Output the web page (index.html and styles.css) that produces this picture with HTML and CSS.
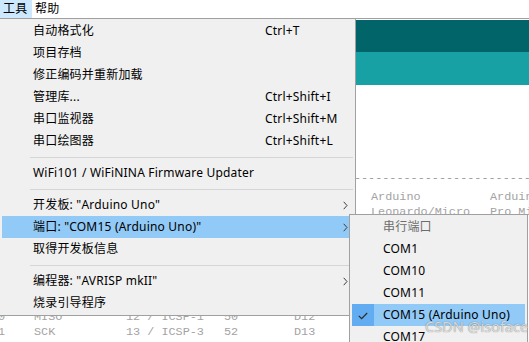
FILE: index.html
```html
<!DOCTYPE html>
<html lang="zh-CN">
<head>
    <meta charset="UTF-8">
    <meta name="viewport" content="width=device-width, initial-scale=1.0">
    <title>Arduino IDE - 工具</title>
    <link rel="stylesheet" href="styles.css">
</head>
<body>
    <div class="window">
        <div class="menubar">
            <span class="menubar-item active">工具</span>
            <span class="menubar-item">帮助</span>
        </div>
        <div class="toolbar"></div>
        <div class="tabs"></div>
        <div class="editor">
            <div class="line dashes">----------------------------------------------------------------------------</div>
            <div class="line boards"><span>Arduino</span><span>Arduino</span></div>
            <div class="line boards"><span>Leonardo/Micro</span><span>Pro Mini</span></div>
            <div class="line"></div>
            <div class="line"></div>
            <div class="line"></div>
            <div class="line"></div>
            <div class="line"></div>
            <div class="line"></div>
            <div class="line pins"><span>0</span><span>MISO</span><span>12 / ICSP-1</span><span>50</span><span>D12</span></div>
            <div class="line pins"><span>1</span><span>SCK</span><span>13 / ICSP-3</span><span>52</span><span>D13</span></div>
        </div>

        <!-- 工具 dropdown -->
        <div class="menu main-menu">
            <div class="item"><span>自动格式化</span><span>Ctrl+T</span></div>
            <div class="item"><span>项目存档</span></div>
            <div class="item"><span>修正编码并重新加载</span></div>
            <div class="item"><span>管理库...</span><span>Ctrl+Shift+I</span></div>
            <div class="item"><span>串口监视器</span><span>Ctrl+Shift+M</span></div>
            <div class="item"><span>串口绘图器</span><span>Ctrl+Shift+L</span></div>
            <div class="separator"></div>
            <div class="item"><span>WiFi101 / WiFiNINA Firmware Updater</span></div>
            <div class="separator"></div>
            <div class="item"><span>开发板: "Arduino Uno"</span><span></span>
                <svg class="arrow" width="5" height="9" viewBox="0 0 5 9"><path d="M0.7 0.8 L4 4.5 L0.7 8.2" fill="none" stroke="#3c3c3c" stroke-width="1"/></svg>
            </div>
            <div class="item selected"><span>端口: "COM15 (Arduino Uno)"</span><span></span>
                <svg class="arrow" width="5" height="9" viewBox="0 0 5 9"><path d="M0.7 0.8 L4 4.5 L0.7 8.2" fill="none" stroke="#3c3c3c" stroke-width="1"/></svg>
            </div>
            <div class="item"><span>取得开发板信息</span></div>
            <div class="separator"></div>
            <div class="item"><span>编程器: "AVRISP mkII"</span><span></span>
                <svg class="arrow" width="5" height="9" viewBox="0 0 5 9"><path d="M0.7 0.8 L4 4.5 L0.7 8.2" fill="none" stroke="#3c3c3c" stroke-width="1"/></svg>
            </div>
            <div class="item"><span>烧录引导程序</span></div>
        </div>

        <!-- 端口 submenu -->
        <div class="menu sub-menu">
            <div class="sub-item disabled">串行端口</div>
            <div class="sub-item">COM1</div>
            <div class="sub-item">COM10</div>
            <div class="sub-item">COM11</div>
            <div class="sub-item checked">
                <svg class="check" width="10" height="8" viewBox="0 0 10 8"><path d="M0.8 3.8 L3.6 6.6 L9.2 1" fill="none" stroke="#2b2b2b" stroke-width="1.2"/></svg>
                COM15 (Arduino Uno)
            </div>
            <div class="sub-item">COM17</div>
        </div>

        <div class="watermark">CSDN @isoface</div>
    </div>
</body>
</html>
```

FILE: styles.css
```css
body {
    margin: 0;
    background: #ffffff;
    font-family: "Noto Sans", "Noto Sans CJK SC", sans-serif;
    font-size: 12px;
    letter-spacing: 0.2px;
    color: #000000;
}
.window {
    position: relative;
    width: 529px;
    height: 342px;
    overflow: hidden;
}
.menubar {
    display: flex;
    height: 18px;
    line-height: 18px;
    border-bottom: 1px solid #a0a0a0;
    margin-bottom: 1px;
}
.menubar-item {
    padding: 0 4px 0 3px;
}
.menubar-item.active {
    background-color: #cce8ff;
    width: 25px;
}
.toolbar {
    height: 32px;
    background-color: #006468;
}
.tabs {
    height: 33px;
    background-color: #17a1a5;
}
.editor {
    padding-top: 86px;
    font-family: "Liberation Mono", monospace;
    font-size: 11.8px;
    letter-spacing: 0;
    color: #a3a3a3;
}
.line {
    height: 15px;
    line-height: 15px;
    white-space: pre;
}
.dashes {
    color: #9a9a9a;
    margin-bottom: 4px;
}
.boards {
    display: grid;
    grid-template-columns: 119px auto;
    padding-left: 371px;
}
.pins {
    display: grid;
    grid-template-columns: 36px 92px 98px 70px auto;
    margin-left: -2px;
}

/* menus */
.menu {
    position: absolute;
    box-sizing: border-box;
    background-color: #f0f0f0;
    border: 1px solid #a0a0a0;
    padding: 1px 0;
}
.main-menu {
    top: 18px;
    left: -1px;
    width: 357px;
    height: 298px;
}
.item {
    display: grid;
    grid-template-columns: 232px 1fr 10px;
    align-items: center;
    height: 22px;
    line-height: 22px;
    margin: 0 2px;
    padding-left: 31px;
    white-space: nowrap;
}
.item.selected {
    background-color: #91c9f7;
}
.arrow {
    display: block;
}
.separator {
    height: 1px;
    margin: 5px 2px 4px 30px;
    background-color: #d5d5d5;
}
.sub-menu {
    top: 214px;
    left: 349px;
    width: 179px;
    height: 140px;
}
.sub-item {
    position: relative;
    height: 22px;
    line-height: 22px;
    margin: 0 2px;
    padding-left: 31px;
    white-space: nowrap;
}
.sub-item.disabled {
    color: #6d6d6d;
}
.sub-item.checked {
    background: linear-gradient(to right, #62adf2 22px, #91c9f7 22px);
}
.check {
    position: absolute;
    left: 6px;
    top: 8px;
}
.watermark {
    position: absolute;
    left: 425px;
    top: 316px;
    font-size: 14.5px;
    line-height: 20px;
    letter-spacing: 0;
    color: rgba(235, 235, 235, 0.85);
    text-shadow: 0 0 1px rgba(90, 90, 90, 0.9);
}
```
